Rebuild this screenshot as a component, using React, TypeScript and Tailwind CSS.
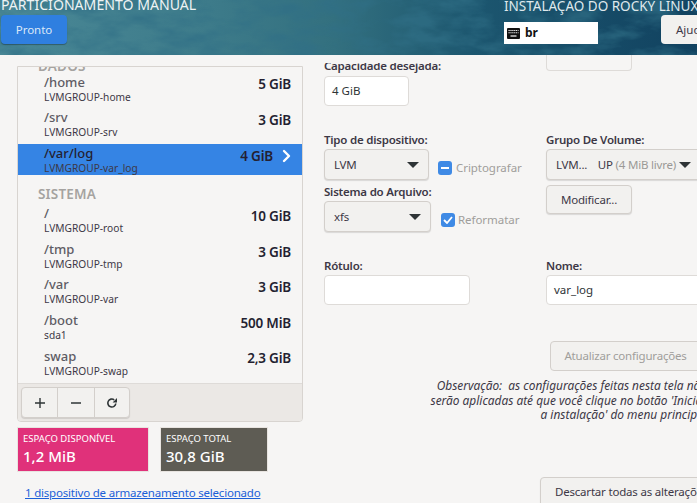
import React from "react";

const font = { fontFamily: '"Noto Sans", "Open Sans", sans-serif' };

function Row({ name, sub, size, selected }: { name: string; sub: string; size: string; selected?: boolean }) {
  return (
    <div className={`h-[31px] mb-[4.6px] pl-[26px] pr-[11px] flex items-center justify-between ${selected ? "bg-[#3584e4]" : ""}`}>
      <div className="flex flex-col">
        <span className={`text-[13px] leading-[16px] font-medium ${selected ? "text-[#241f31]" : "text-[#5e5c64]"}`}>{name}</span>
        <span className="text-[10.2px] leading-[14px] text-[#3d3846]">{sub}</span>
      </div>
      <div className="flex items-center gap-[9px] pb-[8px]">
        <span className="text-[13.5px] font-semibold text-[#241f31] tracking-[-0.2px]">{size}</span>
        {selected && (
          <svg width="9" height="14" viewBox="0 0 9 14" fill="none" stroke="white" strokeWidth="2.4" strokeLinecap="round" strokeLinejoin="round">
            <path d="M2 2l5 5-5 5" />
          </svg>
        )}
      </div>
    </div>
  );
}

function Label({ children }: { children: React.ReactNode }) {
  return <div className="text-[11.5px] leading-[14px] font-semibold text-[#3d3846] tracking-[-0.22px] whitespace-nowrap">{children}</div>;
}

function Combo({ children, className }: { children: React.ReactNode; className: string }) {
  return (
    <div className={`h-[31px] rounded-[4px] border border-[#d3cfcb] bg-[#f2f1ef] shadow-[0_1px_1px_rgba(0,0,0,0.12)] flex items-center justify-between pl-[9px] pr-[9px] text-[11.5px] tracking-[-0.2px] text-[#3d3846] ${className}`}>
      {children}
      <svg width="12" height="6" viewBox="0 0 12 6" className="shrink-0"><path d="M0 0h12L6 6z" fill="#2e3436" /></svg>
    </div>
  );
}

function Btn({ children, className }: { children: React.ReactNode; className: string }) {
  return (
    <div className={`rounded-[4px] border border-[#d3cfcb] bg-[#f2f1ef] shadow-[0_1px_1px_rgba(0,0,0,0.12)] flex items-center justify-center text-[11.5px] tracking-[-0.2px] text-[#3d3846] whitespace-nowrap ${className}`}>
      {children}
    </div>
  );
}

function Input({ children, className }: { children?: React.ReactNode; className: string }) {
  return (
    <div className={`h-[30px] rounded-[4px] border border-[#dedbd8] bg-white flex items-center pl-[7px] text-[11.5px] text-[#2e3436] ${className}`}>
      {children}
    </div>
  );
}

export default function App() {
  return (
    <div className="w-[700px] h-[503px] bg-white overflow-hidden" style={font}>
      <div className="w-[697px] h-[503px] bg-[#f6f5f4] overflow-hidden flex flex-col">
        <header className="relative h-[55px] shrink-0 overflow-hidden bg-[linear-gradient(90deg,#4a8896_0%,#3d7b8a_30%,#33707f_48%,#1c566f_68%,#114260_100%)]">
          <svg className="absolute inset-0 opacity-70" width="697" height="55">
            <filter id="n">
              <feTurbulence type="fractalNoise" baseFrequency="0.025 0.06" numOctaves="4" seed="7" />
              <feColorMatrix values="0 0 0 0 0.03  0 0 0 0 0.16  0 0 0 0 0.24  2.6 0 0 0 -1.0" />
            </filter>
            <rect width="697" height="55" filter="url(#n)" />
          </svg>
          <div className="relative flex justify-between h-full">
            <div className="pl-[1px]">
              <div className="text-[14.1px] leading-[14px] text-[#eef3f4] mt-[-2px] whitespace-nowrap">PARTICIONAMENTO MANUAL</div>
              <div className="mt-[3px] w-[66px] h-[29px] rounded-[4px] bg-[#2f7fe0] shadow-[0_1px_1px_rgba(0,0,0,0.3)] flex items-center justify-center text-[11.5px] text-[#dbe8f8]">Pronto</div>
            </div>
            <div className="flex">
              <div className="w-[157px]">
                <div className="text-[13.5px] leading-[14px] text-[#dfe8ec] mt-[-1px] whitespace-nowrap">INSTALAÇÃO DO ROCKY LINUX</div>
                <div className="mt-[9px] w-[94px] h-[22px] bg-white flex items-center pl-[3px] gap-[5px]">
                  <svg width="13" height="11" viewBox="0 0 13 11">
                    <rect x="0" y="0" width="13" height="11" rx="1" fill="#111" />
                    <path d="M1.5 2.5h10M1.5 4.8h10" stroke="#fff" strokeWidth="1.1" strokeDasharray="1.2 .7" />
                    <path d="M3.5 8h6" stroke="#fff" strokeWidth="1.2" />
                  </svg>
                  <span className="text-[12px] font-bold text-[#111]">br</span>
                </div>
              </div>
              <div className="mt-[15px] w-[36px] h-[29px] rounded-l-[4px] bg-[#f2f1ef] flex items-center pl-[15px] text-[11.5px] text-[#3d3846] overflow-hidden">Ajuda</div>
            </div>
          </div>
        </header>

        <main className="flex-1 flex min-h-0">
          <div className="w-[324px] shrink-0 pl-[17px] pt-[11px]">
            <div className="w-[286px] h-[356px] rounded-b-[4px] border border-[#d8d4d0] flex flex-col overflow-hidden">
              <div className="h-[316px] overflow-hidden">
                <div className="text-[13.5px] leading-[14px] font-semibold text-[#a5a3a0] pl-[20px] mt-[-8px] tracking-[0.2px]">DADOS</div>
                <div>
                  <Row name="/home" sub="LVMGROUP-home" size="5 GiB" />
                  <Row name="/srv" sub="LVMGROUP-srv" size="3 GiB" />
                  <Row name="/var/log" sub="LVMGROUP-var_log" size="4 GiB" selected />
                </div>
                <div className="text-[13.5px] leading-[14px] font-semibold text-[#a5a3a0] pl-[20px] mt-[12px] mb-[3.5px] tracking-[0.2px]">SISTEMA</div>
                <Row name="/" sub="LVMGROUP-root" size="10 GiB" />
                <Row name="/tmp" sub="LVMGROUP-tmp" size="3 GiB" />
                <Row name="/var" sub="LVMGROUP-var" size="3 GiB" />
                <Row name="/boot" sub="sda1" size="500 MiB" />
                <Row name="swap" sub="LVMGROUP-swap" size="2,3 GiB" />
              </div>
              <div className="flex-1 bg-[#ebe8e5] border-t border-[#dedbd8] pl-[3px] pt-[3px]">
                <div className="w-[109px] h-[31px] flex rounded-[4px] border border-[#d3cfcb] bg-[#f2f1ef] shadow-[0_1px_1px_rgba(0,0,0,0.12)] text-[#2e3436]">
                  <div className="w-[36px] flex items-center justify-center border-r border-[#d3cfcb]">
                    <svg width="10" height="10" viewBox="0 0 10 10"><path d="M0 5h10M5 0v10" stroke="#2e3436" strokeWidth="1.4" /></svg>
                  </div>
                  <div className="w-[37px] flex items-center justify-center border-r border-[#d3cfcb]">
                    <svg width="10" height="10" viewBox="0 0 10 10"><path d="M0 5h10" stroke="#2e3436" strokeWidth="1.4" /></svg>
                  </div>
                  <div className="flex-1 flex items-center justify-center">
                    <svg width="12" height="12" viewBox="0 0 12 12" fill="none">
                      <path d="M9.8 6.5A4 4 0 1 1 8.2 2.8" stroke="#2e3436" strokeWidth="1.6" />
                      <path d="M11 1v4.4H6.6z" fill="#2e3436" />
                    </svg>
                  </div>
                </div>
              </div>
            </div>
            <div className="flex gap-[11px] mt-[5px]">
              <div className="w-[132px] h-[45px] bg-[#e0317a] border border-[#e8e4e0] pl-[5px] pt-[5px] text-white">
                <div className="text-[9.5px] leading-[12px] whitespace-nowrap">ESPAÇO DISPONÍVEL</div>
                <div className="text-[15px] leading-[20px] mt-[1px] font-medium">1,2 MiB</div>
              </div>
              <div className="w-[108px] h-[45px] bg-[#5e5c54] border border-[#e8e4e0] pl-[5px] pt-[5px] text-white">
                <div className="text-[9.5px] leading-[12px] whitespace-nowrap">ESPAÇO TOTAL</div>
                <div className="text-[15px] leading-[20px] mt-[1px] font-medium">30,8 GiB</div>
              </div>
            </div>
            <a className="block mt-[13px] ml-[8px] text-[11.5px] tracking-[-0.2px] leading-[15px] text-[#1b5fd8] underline whitespace-nowrap">1 dispositivo de armazenamento selecionado</a>
          </div>

          <div className="flex-1 min-w-0 flex flex-col">
            <div className="h-[21px] flex shrink-0">
              <div className="w-[222px] h-[19px] pt-[8px]">
                <div className="h-[11px] overflow-hidden">
                  <div className="mt-[-4px]"><Label>Capacidade desejada:</Label></div>
                </div>
              </div>
              <div className="w-[86px] h-[16px] rounded-b-[4px] border-x border-b border-[#dedbd8] bg-[#f6f5f4]" />
            </div>
            <Input className="w-[85px]">4 GiB</Input>
            <div className="flex mt-[27px]">
              <div className="w-[222px]">
                <Label>Tipo de dispositivo:</Label>
                <div className="flex mt-[2px]">
                  <Combo className="w-[105px]">LVM</Combo>
                  <div className="flex items-center ml-[9px] mt-[6px] gap-[4px]">
                    <div className="w-[14px] h-[14px] rounded-[3px] bg-[#3f8ae5] flex items-center justify-center"><div className="w-[8px] h-[2px] bg-white" /></div>
                    <span className="text-[11.5px] tracking-[-0.05px] text-[#a09e9b]">Criptografar</span>
                  </div>
                </div>
                <div className="mt-[5px]"><Label>Sistema do Arquivo:</Label></div>
                <div className="flex mt-[2px]">
                  <Combo className="w-[107px]">xfs</Combo>
                  <div className="flex items-center ml-[10px] mt-[6px] gap-[3px]">
                    <div className="w-[14px] h-[14px] rounded-[3px] bg-[#3f8ae5] flex items-center justify-center">
                      <svg width="10" height="8" viewBox="0 0 10 8" fill="none"><path d="M1 4l3 3 5-6" stroke="#fff" strokeWidth="1.8" /></svg>
                    </div>
                    <span className="text-[11.5px] tracking-[-0.05px] text-[#a09e9b]">Reformatar</span>
                  </div>
                </div>
              </div>
              <div className="flex-1 min-w-0">
                <Label>Grupo De Volume:</Label>
                <Combo className="w-[155px] mt-[2px] pr-[3px]">
                  <span className="whitespace-nowrap"><span className="mr-[5px]">LVM...</span>&nbsp;&nbsp;UP <span className="text-[#9a9996]">(4 MiB livre)</span></span>
                </Combo>
                <Btn className="w-[86px] h-[29px] mt-[5px]">Modificar...</Btn>
              </div>
            </div>
            <div className="flex mt-[27px]">
              <div className="w-[222px]">
                <Label>Rótulo:</Label>
                <Input className="w-[146px] mt-[2px]" />
              </div>
              <div className="flex-1 min-w-0">
                <Label>Nome:</Label>
                <Input className="w-[155px] mt-[2px]">var_log</Input>
              </div>
            </div>
            <div className="mt-[36px] pl-[226px]">
              <Btn className="w-[155px] h-[30px] text-[#a09e9b] pr-[4px] shadow-none">Atualizar configurações</Btn>
            </div>
            <div className="mt-[7px] mr-[-10px] text-right italic text-[11.9px] leading-[14.6px] text-[#3d3846] whitespace-nowrap">
              <div>Observação:&nbsp; as configurações feitas nesta tela não</div>
              <div>serão aplicadas até que você clique no botão 'Iniciar</div>
              <div>a instalação' do menu principal</div>
            </div>
            <div className="mt-auto pl-[216px]">
              <Btn className="w-[170px] h-[30px] mb-[-4px] justify-start pl-[14px] overflow-hidden">Descartar todas as alterações</Btn>
            </div>
          </div>
        </main>
      </div>
    </div>
  );
}
